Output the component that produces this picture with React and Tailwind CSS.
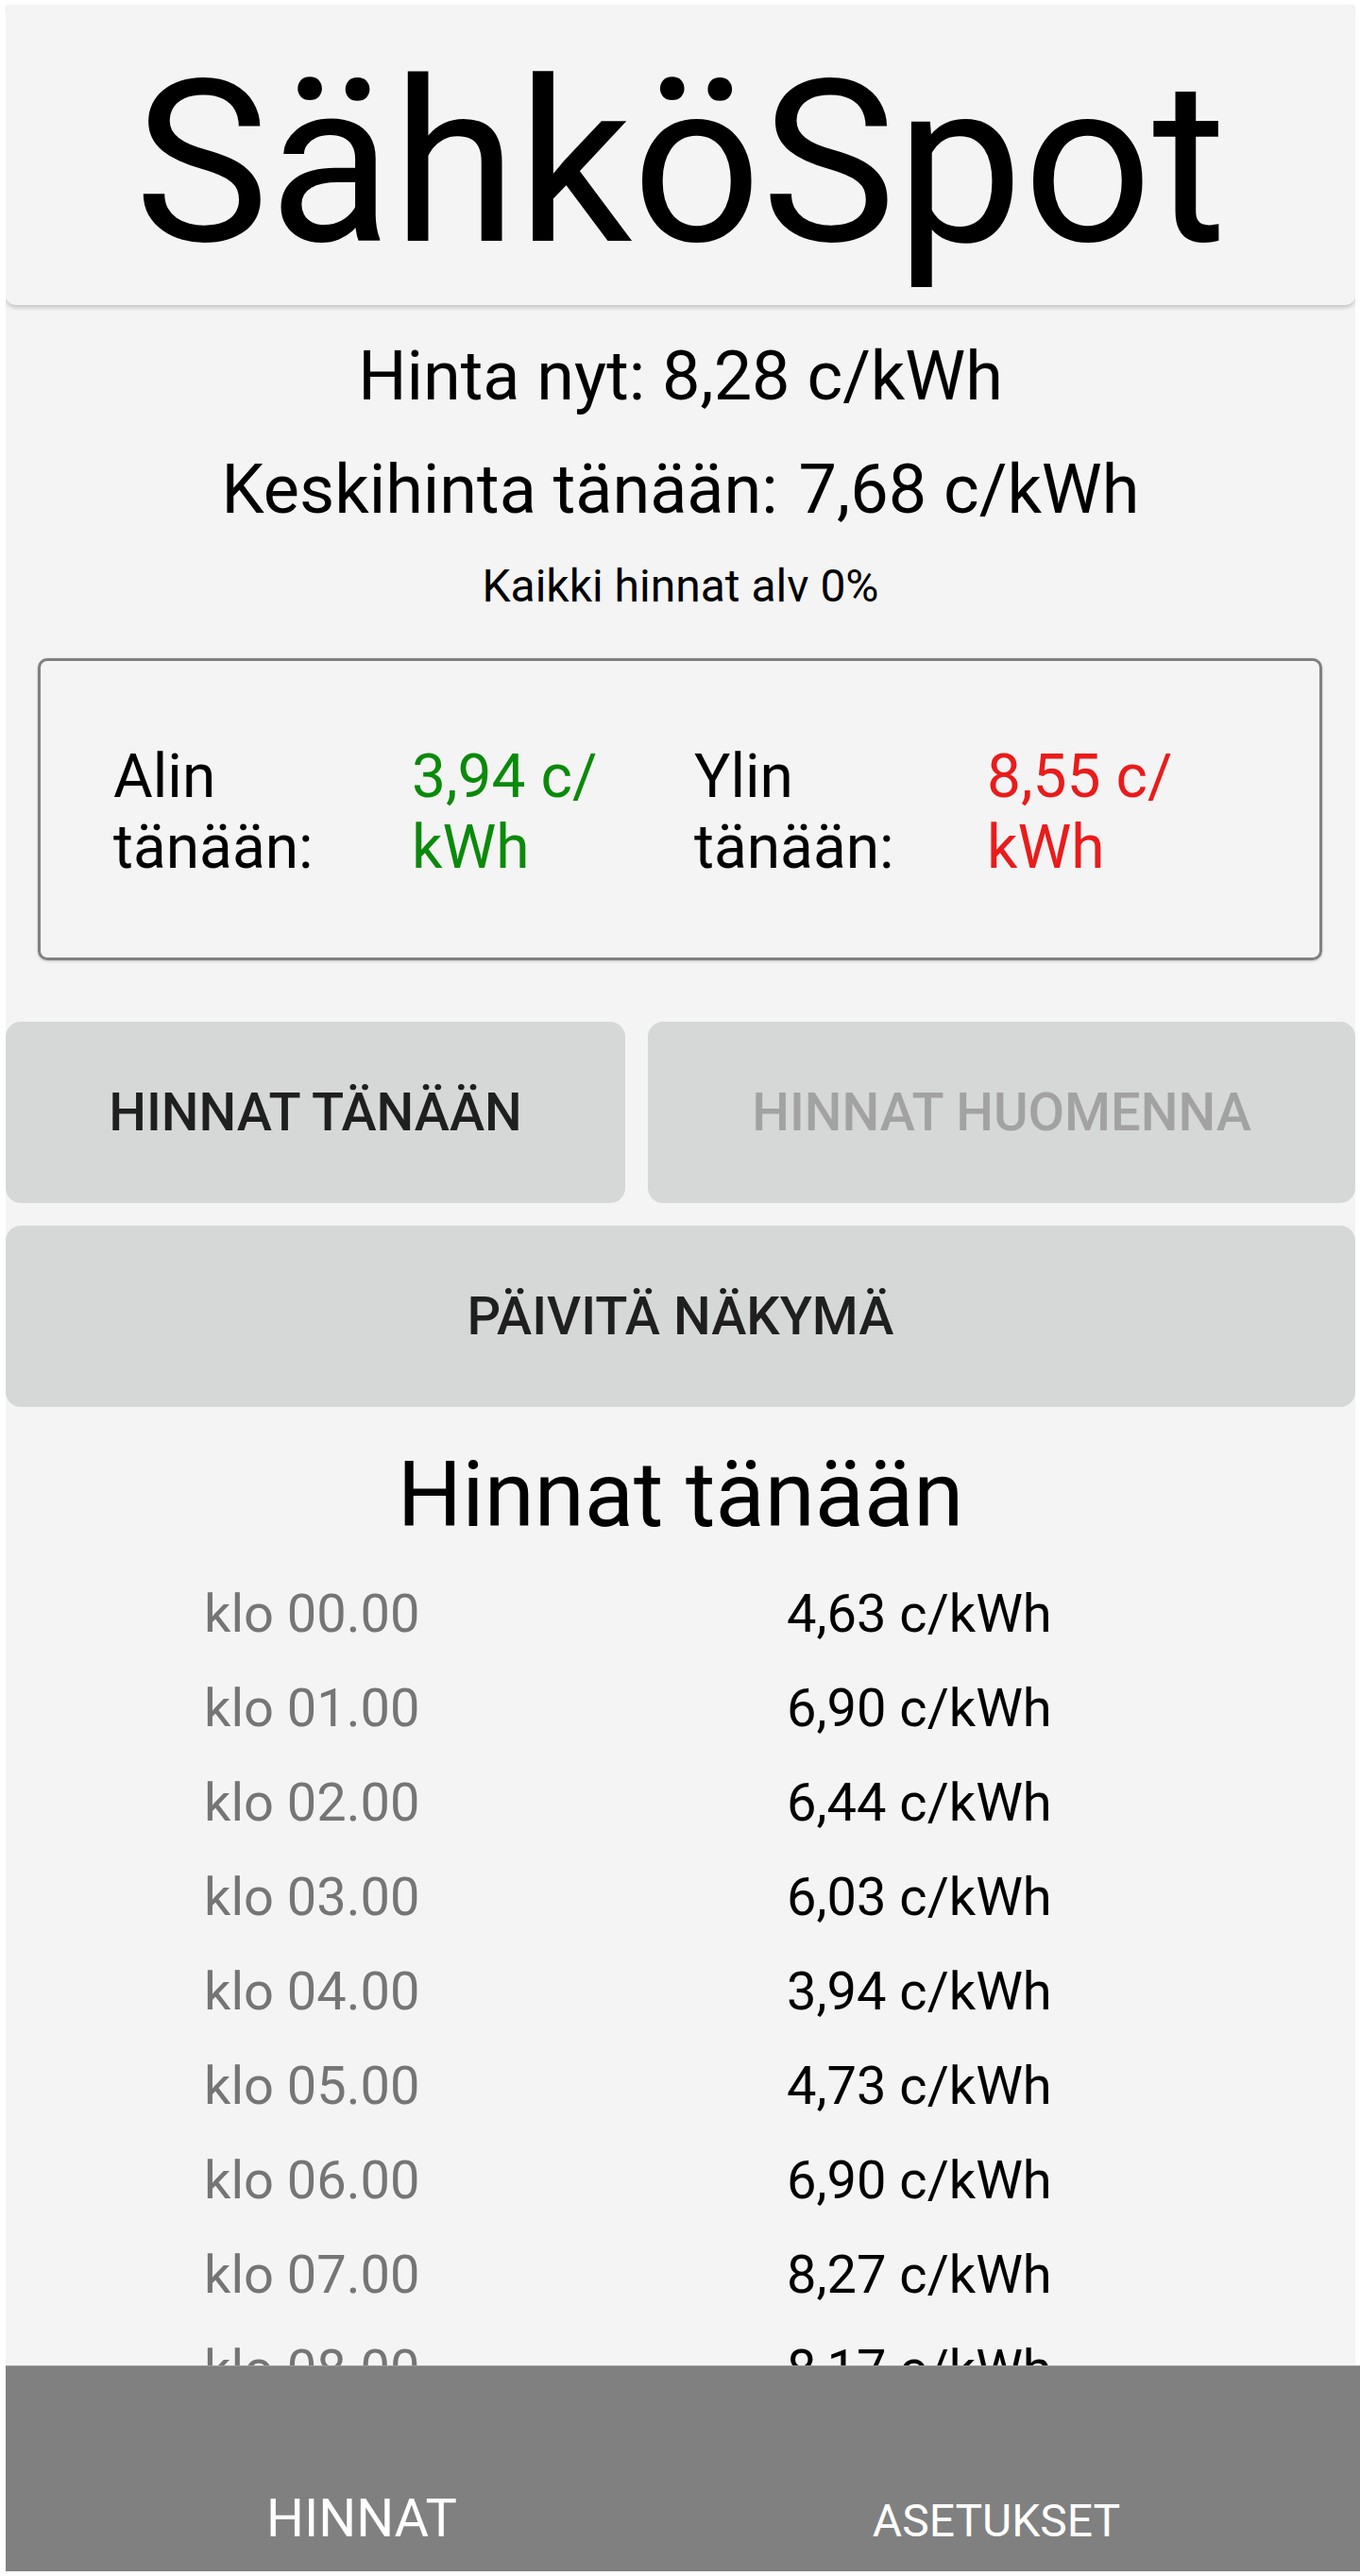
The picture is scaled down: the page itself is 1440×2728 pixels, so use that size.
const prices = [
  ["klo 00.00", "4,63 c/kWh"],
  ["klo 01.00", "6,90 c/kWh"],
  ["klo 02.00", "6,44 c/kWh"],
  ["klo 03.00", "6,03 c/kWh"],
  ["klo 04.00", "3,94 c/kWh"],
  ["klo 05.00", "4,73 c/kWh"],
  ["klo 06.00", "6,90 c/kWh"],
  ["klo 07.00", "8,27 c/kWh"],
  ["klo 08.00", "8,17 c/kWh"],
]

export default function App() {
  return (
    <div
      className="w-[1440px] h-[2728px] bg-white flex flex-col pt-[5px] pb-[5px] pl-[6px] text-black"
      style={{ fontFamily: "Roboto, 'Noto Sans', sans-serif" }}
    >
      {/* Main content */}
      <div className="flex-1 mr-[5px] bg-[#f4f4f4] overflow-hidden flex flex-col">
        {/* Title card */}
        <div className="h-[318px] shrink-0 rounded-[10px] bg-[#f4f4f4] shadow-[0_3px_4px_rgba(0,0,0,0.18)] pt-[48px] text-center">
          <h1 className="text-[240px] leading-[240px] font-normal">SähköSpot</h1>
        </div>

        {/* Current prices */}
        <div className="mt-[16px] text-center">
          <p className="text-[72px] leading-[120px]">Hinta nyt: 8,28 c/kWh</p>
          <p className="text-[72px] leading-[120px]">
            Keskihinta tänään: <span className="ml-[4px]">7,68 c/kWh</span>
          </p>
          <p className="mt-[14px] text-[48px] leading-[56px]">Kaikki hinnat alv 0%</p>
        </div>

        {/* Min / max box */}
        <div className="mt-[48px] ml-[34px] mr-[35px] h-[320px] shrink-0 border-[3px] border-[#808080] rounded-[10px] shadow-[0_1px_3px_rgba(0,0,0,0.2)] flex items-center pt-[5px] pl-[77px]">
          <div className="w-full grid grid-cols-[316px_299px_310px_1fr] text-[64px] leading-[75px]">
            <div>
              Alin
              <br />
              tänään:
            </div>
            <div className="text-[#0a8a0a]">
              3,94 c/
              <br />
              kWh
            </div>
            <div>
              Ylin
              <br />
              tänään:
            </div>
            <div className="text-[#ea1b1b]">
              8,55 c/
              <br />
              kWh
            </div>
          </div>
        </div>

        {/* Buttons */}
        <div className="mt-[65px] flex gap-[24px]">
          <button className="w-[656px] h-[192px] rounded-[16px] bg-[#d6d7d7] text-[56px] font-medium text-[#1f1f1f]">
            HINNAT TÄNÄÄN
          </button>
          <button className="flex-1 h-[192px] rounded-[16px] bg-[#d6d7d7] text-[56px] font-medium text-[#a2a2a2]">
            HINNAT HUOMENNA
          </button>
        </div>
        <button className="mt-[24px] h-[192px] shrink-0 rounded-[16px] bg-[#d6d7d7] text-[56px] font-medium text-[#1f1f1f]">
          PÄIVITÄ NÄKYMÄ
        </button>

        {/* Price list */}
        <h2 className="mt-[37px] text-center text-[96px] leading-[112px] font-normal">Hinnat tänään</h2>
        <div className="mt-[20px] pl-[210px]">
          {prices.map(([time, price]) => (
            <div key={time} className="grid grid-cols-[617px_1fr] text-[56px] leading-[100px]">
              <span className="text-[#757575]">{time}</span>
              <span>{price}</span>
            </div>
          ))}
        </div>
      </div>

      {/* Bottom navigation */}
      <nav className="h-[218px] shrink-0 bg-[#808080] border-t border-[#9c9c9c] flex flex-col justify-end pb-[25px]">
        <div className="flex items-baseline pl-[41px] text-white">
          <div className="w-[672px] text-center text-[56px] leading-[56px]">HINNAT</div>
          <div className="w-[672px] text-center text-[48px] leading-[56px]">ASETUKSET</div>
        </div>
      </nav>
    </div>
  )
}
